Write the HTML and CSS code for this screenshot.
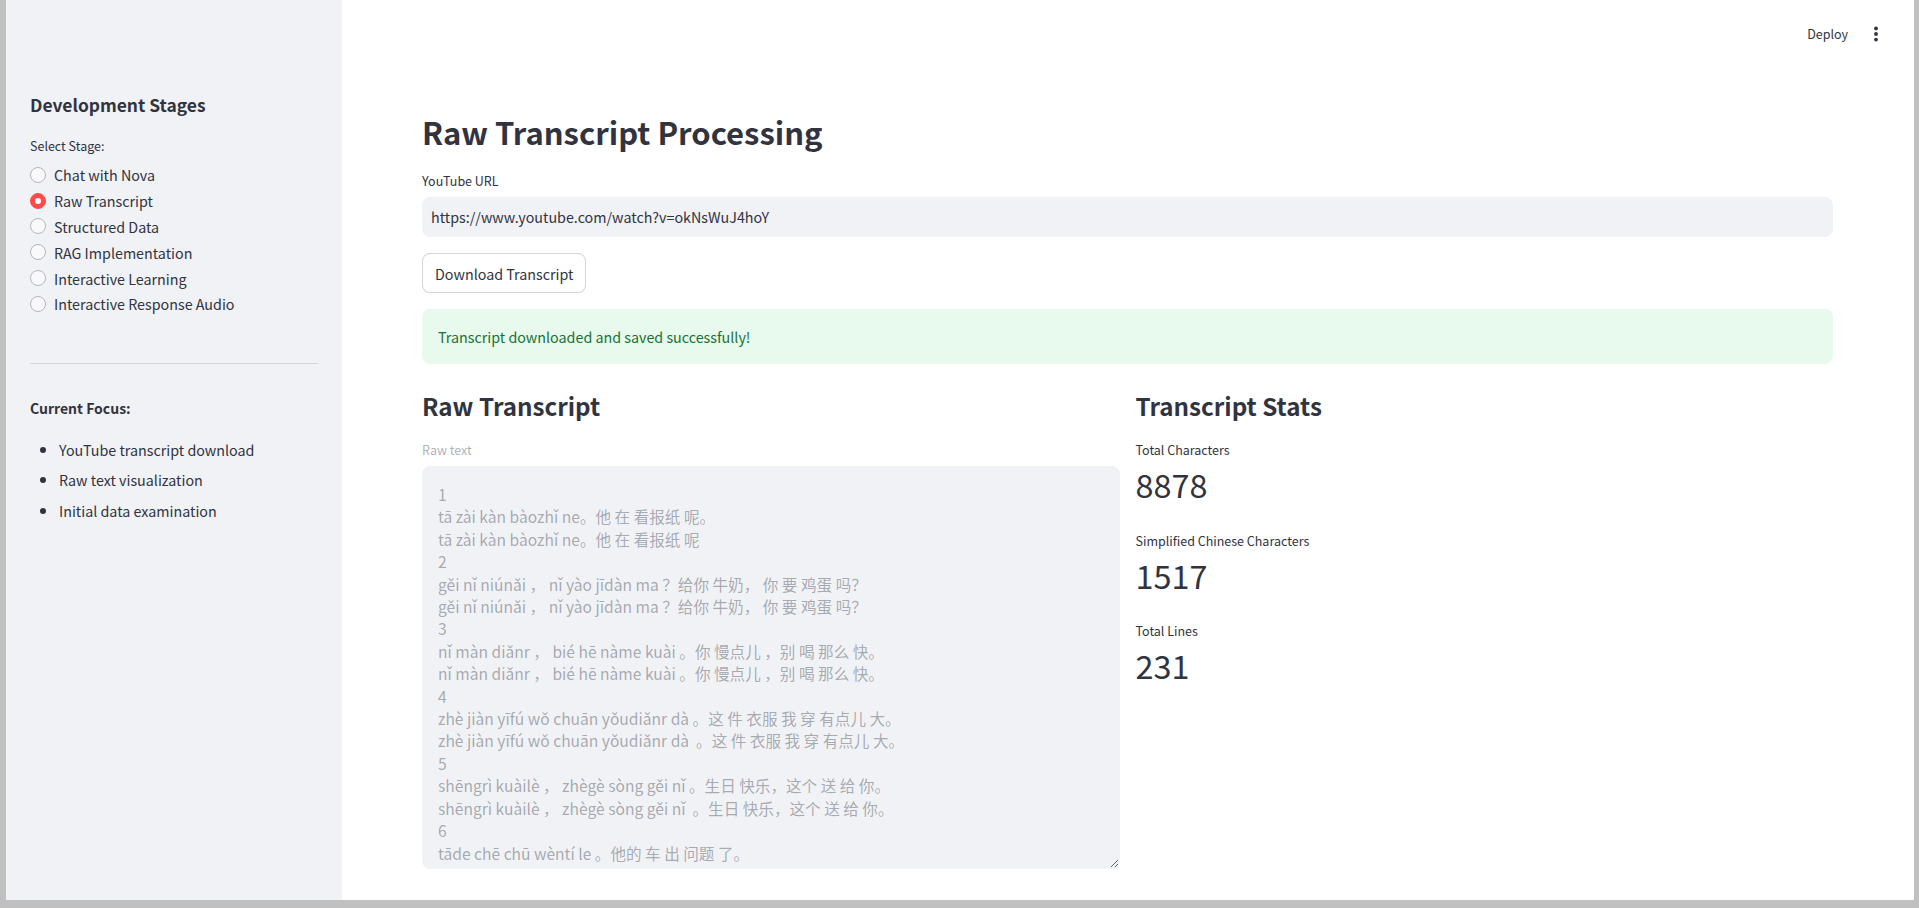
FILE: index.html
```html
<!DOCTYPE html>
<html lang="en">
<head>
<meta charset="utf-8">
<title>Raw Transcript Processing</title>
<link rel="stylesheet" href="styles.css">
</head>
<body>
<div class="app">
  <aside class="sidebar">
    <h3 class="side-title">Development Stages</h3>
    <div class="side-label">Select Stage:</div>
    <div class="radios">
      <div class="radio"><span class="dot"></span><span>Chat with Nova</span></div>
      <div class="radio checked"><span class="dot"></span><span>Raw Transcript</span></div>
      <div class="radio"><span class="dot"></span><span>Structured Data</span></div>
      <div class="radio"><span class="dot"></span><span>RAG Implementation</span></div>
      <div class="radio"><span class="dot"></span><span>Interactive Learning</span></div>
      <div class="radio"><span class="dot"></span><span>Interactive Response Audio</span></div>
    </div>
    <hr class="side-rule">
    <div class="focus-title">Current Focus:</div>
    <ul class="focus-list">
      <li>YouTube transcript download</li>
      <li>Raw text visualization</li>
      <li>Initial data examination</li>
    </ul>
  </aside>
  <main class="main">
    <header class="toolbar">
      <span class="deploy">Deploy</span>
      <svg class="menu" width="6" height="16" viewBox="0 0 6 16"><circle cx="3" cy="2.4" r="1.9" fill="#31333F"/><circle cx="3" cy="8" r="1.9" fill="#31333F"/><circle cx="3" cy="13.6" r="1.9" fill="#31333F"/></svg>
    </header>
    <div class="content">
      <h1 class="title">Raw Transcript Processing</h1>
      <div class="label">YouTube URL</div>
      <div class="input">https://www.youtube.com/watch?v=okNsWuJ4hoY</div>
      <div class="btn-row"><button class="btn">Download Transcript</button></div>
      <div class="success">Transcript downloaded and saved successfully!</div>
      <div class="cols">
        <section class="col">
          <h3 class="h3">Raw Transcript</h3>
          <div class="label disabled">Raw text</div>
          <textarea class="raw" readonly>1
tā zài kàn bàozhǐ ne。他 在 看报纸 呢。
tā zài kàn bàozhǐ ne。他 在 看报纸 呢
2
gěi nǐ niúnǎi ， nǐ yào jīdàn ma ？给你 牛奶， 你 要 鸡蛋 吗？
gěi nǐ niúnǎi ， nǐ yào jīdàn ma ？给你 牛奶， 你 要 鸡蛋 吗？
3
nǐ màn diǎnr ， bié hē nàme kuài 。你 慢点儿 ，别 喝 那么 快。
nǐ màn diǎnr ， bié hē nàme kuài 。你 慢点儿 ，别 喝 那么 快。
4
zhè jiàn yīfú wǒ chuān yǒudiǎnr dà 。这 件 衣服 我 穿 有点儿 大。
zhè jiàn yīfú wǒ chuān yǒudiǎnr dà  。这 件 衣服 我 穿 有点儿 大。
5
shēngrì kuàilè ， zhègè sòng gěi nǐ 。生日 快乐，这个 送 给 你。
shēngrì kuàilè ， zhègè sòng gěi nǐ  。生日 快乐，这个 送 给 你。
6
tāde chē chū wèntí le 。他的 车 出 问题 了。
tāde chē chū wèntí le 。他的 车 出 问题 了。
7
wǒ xiǎng qù gōngyuán 。我 想 去 公园。
wǒ xiǎng qù gōngyuán 。我 想 去 公园。</textarea>
        </section>
        <section class="col">
          <h3 class="h3">Transcript Stats</h3>
          <div class="metric">
            <div class="label">Total Characters</div>
            <div class="metric-value">8878</div>
          </div>
          <div class="metric">
            <div class="label">Simplified Chinese Characters</div>
            <div class="metric-value">1517</div>
          </div>
          <div class="metric">
            <div class="label">Total Lines</div>
            <div class="metric-value">231</div>
          </div>
        </section>
      </div>
    </div>
  </main>
</div>
</body>
</html>
```
FILE: styles.css
```css
* { box-sizing: border-box; }
html, body { margin: 0; padding: 0; }
body {
  background: #c0c0c0;
  font-family: "Noto Sans CJK SC", "Source Sans Pro", "Noto Sans", sans-serif;
  color: #31333F;
  height: 908px;
  overflow: hidden;
}
.app {
  display: flex;
  height: 900px;
  margin: 0 5px 0 6px;
  background: #ffffff;
}
.sidebar {
  width: 336px;
  flex: none;
  background: #f0f2f6;
  padding: 91px 24px 0 24px;
}
.side-title {
  margin: 0;
  font-size: 17.4px;
  line-height: 28px;
  font-weight: 700;
}
.side-label {
  margin-top: 17px;
  font-size: 12.5px;
  line-height: 20px;
}
.radios {
  margin-top: 6px;
  display: flex;
  flex-direction: column;
}
.radio {
  height: 25.8px;
  display: flex;
  align-items: center;
  gap: 8px;
  font-size: 14.3px;
}
.dot {
  width: 16px;
  height: 16px;
  border-radius: 50%;
  border: 1px solid #b5b6bc;
  background: #f9f9fb;
  flex: none;
  display: flex;
  align-items: center;
  justify-content: center;
}
.radio.checked .dot {
  background: #ff4b4b;
  border-color: #ff4b4b;
}
.radio.checked .dot::after {
  content: "";
  width: 6px;
  height: 6px;
  border-radius: 50%;
  background: #ffffff;
}
.side-rule {
  margin: 46px 0 0 0;
  border: none;
  border-top: 1px solid #d3d4d9;
  height: 0;
}
.focus-title {
  margin-top: 34px;
  font-size: 14px;
  line-height: 20px;
  font-weight: 700;
}
.focus-list {
  margin: 19px 0 0 0;
  padding-left: 29px;
  font-size: 14.3px;
}
.focus-list li {
  line-height: 24px;
  margin-bottom: 5.6px;
}
.focus-list li::marker { font-size: 16px; }
.main {
  flex: 1;
  display: flex;
  flex-direction: column;
  min-width: 0;
}
.toolbar {
  height: 68px;
  display: flex;
  justify-content: flex-end;
  align-items: center;
  gap: 25px;
  padding-right: 35px;
}
.deploy {
  font-size: 12.5px;
  line-height: 20px;
}
.menu { display: block; }
.content {
  padding: 42px 81px 0 80px;
}
.title {
  margin: 0;
  font-size: 31px;
  line-height: 43px;
  font-weight: 700;
}
.label {
  font-size: 12.5px;
  line-height: 20px;
}
.title + .label { margin-top: 18px; }
.label.disabled { color: rgba(49, 51, 63, 0.4); }
.input {
  margin-top: 6px;
  height: 40px;
  background: #f0f2f6;
  border: 1px solid #f0f2f6;
  border-radius: 8px;
  padding: 0 8px;
  font-size: 14.3px;
  line-height: 38px;
}
.btn-row { margin-top: 16px; }
.btn {
  height: 40px;
  padding: 0 12px;
  background: #ffffff;
  border: 1px solid rgba(49, 51, 63, 0.2);
  border-radius: 8px;
  font-family: inherit;
  font-size: 14.3px;
  color: #31333F;
}
.success {
  margin-top: 16px;
  background: #e8f9ee;
  border-radius: 8px;
  padding: 16px;
  font-size: 14.3px;
  line-height: 23px;
  color: #177233;
}
.cols {
  margin-top: 25px;
  display: grid;
  grid-template-columns: 1fr 1fr;
  gap: 16px;
}
.h3 {
  margin: 0;
  font-size: 24.2px;
  line-height: 34px;
  font-weight: 700;
}
.h3 + .label, .h3 + .metric { margin-top: 17px; }
.raw {
  display: block;
  margin-top: 6px;
  width: 100%;
  height: 403px;
  background: #f0f2f6;
  border: 1px solid #f0f2f6;
  border-radius: 8px;
  padding: 16px 15px;
  font-family: inherit;
  font-size: 15.6px;
  line-height: 22.4px;
  color: rgba(49, 51, 63, 0.4);
  resize: vertical;
  overflow: hidden;
  outline: none;
}
.metric + .metric { margin-top: 24.6px; }
.metric-value {
  margin-top: 2px;
  font-size: 32.4px;
  line-height: 44px;
}
```
